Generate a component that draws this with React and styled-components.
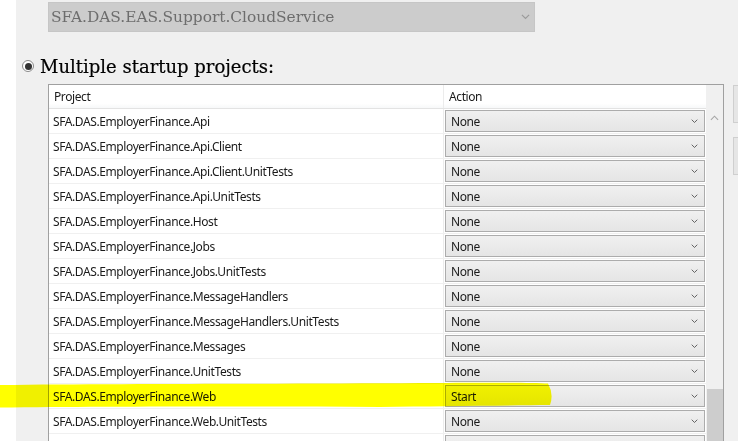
import React from "react";
import styled, { createGlobalStyle } from "styled-components";

const GlobalStyle = createGlobalStyle`
  html, body {
    margin: 0;
    padding: 0;
    width: 738px;
    height: 441px;
    overflow: hidden;
    background: #ffffff;
  }
`;

const Page = styled.div`
  position: relative;
  display: flex;
  width: 738px;
  height: 441px;
  background: #ffffff;
  overflow: hidden;
`;

const Panel = styled.div`
  margin-left: 16px;
  flex: 1;
  min-width: 0;
  background: #f0f0f0;
  padding-top: 2px;
  display: flex;
  flex-direction: column;
`;

const Combo = styled.div`
  margin-left: 32px;
  width: 487px;
  height: 30px;
  box-sizing: border-box;
  background: #cccccc;
  border: 1px solid #c6c6c6;
  display: flex;
  align-items: center;
  justify-content: space-between;
  padding: 0 4px 0 2px;
  font-family: "DejaVu Serif", serif;
  font-size: 15.4px;
  color: #6d6d6d;
`;

const RadioRow = styled.label`
  margin-top: 24px;
  height: 20px;
  padding-left: 6px;
  display: flex;
  align-items: center;
  gap: 6px;
  font-family: "DejaVu Serif", serif;
  font-size: 18px;
  color: #000000;
  -webkit-text-stroke: 0.2px #000;
`;

const RadioDot = styled.span`
  width: 12px;
  height: 12px;
  box-sizing: border-box;
  border-radius: 50%;
  border: 1px solid #8a8a8a;
  background: #ffffff;
  display: flex;
  align-items: center;
  justify-content: center;

  &::after {
    content: "";
    width: 7px;
    height: 7px;
    border-radius: 50%;
    background: #333333;
  }
`;

const Content = styled.div`
  margin-top: 8px;
  margin-left: 32px;
  flex: 1;
  min-height: 0;
  display: flex;
  gap: 9px;
`;

const Table = styled.div`
  width: 676px;
  flex: none;
  box-sizing: border-box;
  border: 1px solid #a0a0a0;
  border-bottom: none;
  display: flex;
  background: #ffffff;
  overflow: hidden;
`;

const Body = styled.div`
  width: 657px;
  display: flex;
  flex-direction: column;
  font-family: "Segoe UI", "Noto Sans", sans-serif;
  font-size: 12px;
  letter-spacing: -0.4px;
  color: #1a1a1a;
`;

const Row = styled.div`
  display: grid;
  grid-template-columns: 395px 262px;
  height: ${(p) => (p.$header ? 24 : 25)}px;
  flex: none;
  box-sizing: border-box;
  border-bottom: 1px solid ${(p) => (p.$header ? "#e3e3e3" : "#f0f0f0")};
`;

const Cell = styled.div`
  display: flex;
  align-items: center;
  padding-left: ${(p) => (p.$header ? 5 : 4)}px;
  white-space: nowrap;
  overflow: hidden;
  border-right: ${(p) => (p.$first ? "1px solid #ececec" : "none")};
  background: ${(p) => (p.$header ? "linear-gradient(#ffffff 80%, #f7f8f9)" : "#ffffff")};
`;

const ActionCell = styled.div`
  padding: 1px 0 0 1px;
`;

const Select = styled.div`
  width: 260px;
  height: 22px;
  box-sizing: border-box;
  border: 1px solid #acacac;
  background: linear-gradient(#f0f0f0, #e5e5e5);
  display: flex;
  align-items: center;
  justify-content: space-between;
  padding: 0 6px 0 5px;
  color: #1a1a1a;
`;

const Scrollbar = styled.div`
  width: 17px;
  background: #f0f0f0;
  display: flex;
  flex-direction: column;
  align-items: center;
  padding-top: 30px;
  box-sizing: border-box;
`;

const Track = styled.div`
  flex: 1;
  width: 100%;
  display: flex;
  flex-direction: column;
  justify-content: flex-end;
`;

const Thumb = styled.div`
  height: 52px;
  margin-left: 1px;
  background: #cdcdcd;
`;

const SideColumn = styled.div`
  display: flex;
  flex-direction: column;
  gap: 14px;
  padding-top: 1px;
`;

const SideButton = styled.div`
  width: 40px;
  height: 38px;
  box-sizing: border-box;
  border: 1px solid #cfcfcf;
  background: #e6e6e6;
`;

const Highlight = styled.svg`
  position: absolute;
  left: 0;
  top: 380px;
  width: 560px;
  height: 32px;
  mix-blend-mode: multiply;
  pointer-events: none;
`;

const Chevron = ({ color = "#555", w = 7 }) => (
  <svg width={w} height={w * 0.6} viewBox="0 0 10 6">
    <path d="M1 1 L5 5 L9 1" fill="none" stroke={color} strokeWidth="1.3" />
  </svg>
);

const projects = [
  ["SFA.DAS.EmployerFinance.Api", "None"],
  ["SFA.DAS.EmployerFinance.Api.Client", "None"],
  ["SFA.DAS.EmployerFinance.Api.Client.UnitTests", "None"],
  ["SFA.DAS.EmployerFinance.Api.UnitTests", "None"],
  ["SFA.DAS.EmployerFinance.Host", "None"],
  ["SFA.DAS.EmployerFinance.Jobs", "None"],
  ["SFA.DAS.EmployerFinance.Jobs.UnitTests", "None"],
  ["SFA.DAS.EmployerFinance.MessageHandlers", "None"],
  ["SFA.DAS.EmployerFinance.MessageHandlers.UnitTests", "None"],
  ["SFA.DAS.EmployerFinance.Messages", "None"],
  ["SFA.DAS.EmployerFinance.UnitTests", "None"],
  ["SFA.DAS.EmployerFinance.Web", "Start"],
  ["SFA.DAS.EmployerFinance.Web.UnitTests", "None"],
  ["", ""],
];

export default function App() {
  return (
    <>
      <GlobalStyle />
      <Page>
        <Panel>
          <Combo>
            <span>SFA.DAS.EAS.Support.CloudService</span>
            <Chevron color="#9a9a9a" w={9} />
          </Combo>

          <RadioRow>
            <RadioDot />
            <span>Multiple startup projects:</span>
          </RadioRow>

          <Content>
            <Table>
              <Body>
                <Row $header>
                  <Cell $header $first>Project</Cell>
                  <Cell $header>Action</Cell>
                </Row>
                {projects.map(([name, action], i) => (
                  <Row key={i}>
                    <Cell $first>{name}</Cell>
                    <ActionCell>
                      <Select>
                        <span>{action}</span>
                        <Chevron />
                      </Select>
                    </ActionCell>
                  </Row>
                ))}
              </Body>
              <Scrollbar>
                <svg width="9" height="6" viewBox="0 0 10 6">
                  <path d="M1 5 L5 1 L9 5" fill="none" stroke="#a6a6a6" strokeWidth="1.2" />
                </svg>
                <Track>
                  <Thumb />
                </Track>
              </Scrollbar>
            </Table>
            <SideColumn>
              <SideButton />
              <SideButton />
            </SideColumn>
          </Content>
        </Panel>

        <Highlight viewBox="0 0 560 32">
          <path
            d="M0 5 C 120 3.5, 300 4, 420 3 C 480 2.5, 530 2.5, 548 3.5 Q 554 14 550 25 C 500 25.5, 440 26, 380 27 C 250 26, 100 26.5, 0 27.5 Z"
            fill="#ffff00"
          />
        </Highlight>
      </Page>
    </>
  );
}
